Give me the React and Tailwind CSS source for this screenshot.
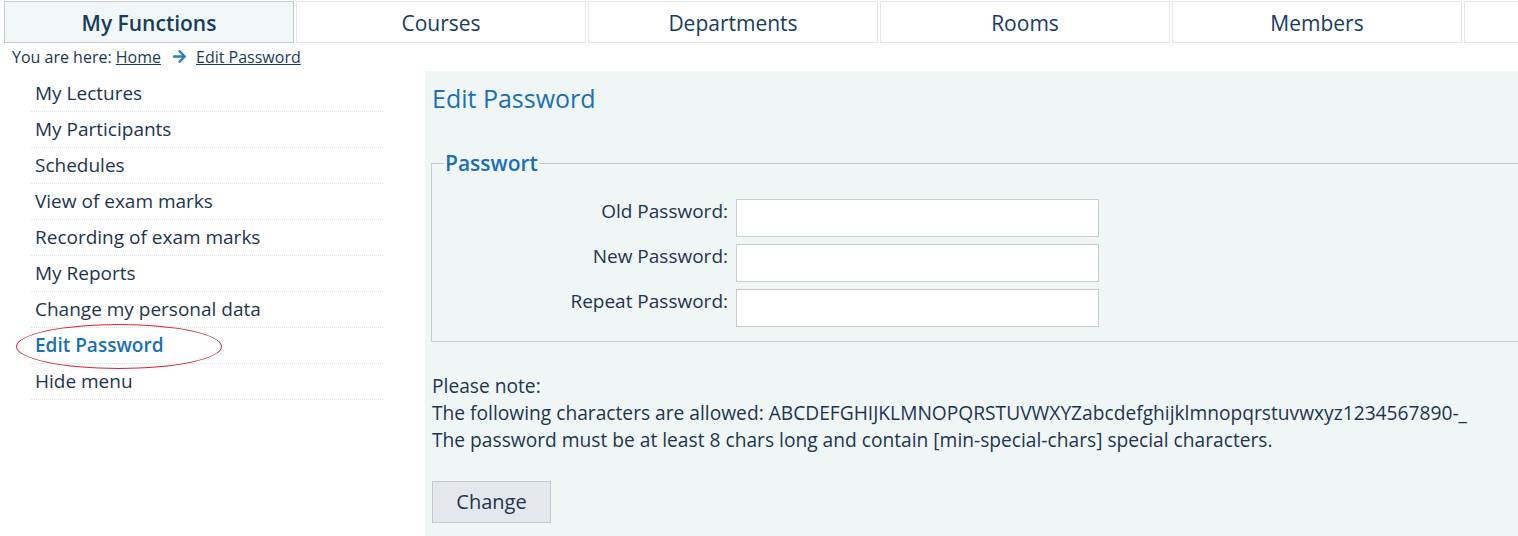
import React from 'react';
import { FaArrowRight } from 'react-icons/fa';

const tabs = ['My Functions', 'Courses', 'Departments', 'Rooms', 'Members', 'Help'];

const menu = [
    'My Lectures',
    'My Participants',
    'Schedules',
    'View of exam marks',
    'Recording of exam marks',
    'My Reports',
    'Change my personal data',
    'Edit Password',
    'Hide menu',
];

const fields = ['Old Password:', 'New Password:', 'Repeat Password:'];

const App = () => {
    return (
        <div className="w-[1518px] h-[536px] overflow-hidden bg-white text-[#1c3550]" style={{ fontFamily: '"Open Sans", "Noto Sans", sans-serif' }}>
            {/* top navigation */}
            <div className="flex gap-[2px] pl-[4px] pt-[1px]">
                {tabs.map((t, i) => (
                    <div
                        key={t}
                        className={
                            i === 0
                                ? 'w-[290px] h-[42px] shrink-0 flex items-center justify-center pt-[3px] border border-[#c9cccc] bg-[#f1f7f7] text-[21px] font-semibold text-[#173c5e]'
                                : 'w-[290px] h-[42px] shrink-0 flex items-center justify-center pt-[3px] border border-[#e4e7e9] bg-white text-[21px] text-[#173c5e]'
                        }
                    >
                        {i === 5 ? '' : t}
                    </div>
                ))}
            </div>

            {/* breadcrumb */}
            <div className="h-[28px] pl-[12px] pb-[1px] flex items-center text-[16px] text-[#1c3550]">
                <span>You are here:&nbsp;</span>
                <a className="underline text-[#173c5e]">Home</a>
                <FaArrowRight className="ml-[11px] mr-[9px] text-[15px] text-[#2a7fc0]" />
                <a className="underline text-[#173c5e]">Edit Password</a>
            </div>

            <div className="flex">
                {/* sidebar */}
                <div className="w-[425px] shrink-0 pt-[5px]">
                    <ul className="ml-[31px] w-[352px]">
                        {menu.map((m) => (
                            <li
                                key={m}
                                className="relative h-[36px] flex items-center pl-[4px] border-b border-dotted border-[#dde1e3] text-[19px]"
                            >
                                {m === 'Edit Password' ? (
                                    <>
                                        <span className="font-semibold text-[#1a6fb5]">{m}</span>
                                        <div className="absolute left-[-15px] top-[-4px] w-[206px] h-[45px] rounded-[50%] border border-[#d22a35]" />
                                    </>
                                ) : (
                                    <span className="text-[#1c3550]">{m}</span>
                                )}
                            </li>
                        ))}
                    </ul>
                </div>

                {/* content panel */}
                <div className="flex-1 h-[465px] overflow-hidden bg-[#f0f6f6] pl-[6px] pt-[11px]">
                    <h1 className="pl-[1px] text-[25px] leading-[32px] text-[#1a6fb5]">Edit Password</h1>

                    <fieldset className="mt-[35px] mr-[-20px] border border-[#c9cccc] pb-[14px]">
                        <legend className="ml-[12px] px-[1px] text-[21px] leading-[28px] font-semibold text-[#1a6fb5]">Passwort</legend>
                        <div className="flex flex-col gap-[7px] pt-[22px]">
                            {fields.map((f) => (
                                <div key={f} className="flex items-start">
                                    <label className="w-[296px] text-right text-[19px] leading-[24px] text-[#1c3550]">{f}</label>
                                    <input
                                        type="password"
                                        className="ml-[8px] w-[363px] h-[38px] border border-[#c9cccc] bg-white"
                                    />
                                </div>
                            ))}
                        </div>
                    </fieldset>

                    <div className="mt-[30px] pl-[1px] text-[19.2px] leading-[27px] text-[#1c3550]">
                        <p>Please note:</p>
                        <p>The following characters are allowed: ABCDEFGHIJKLMNOPQRSTUVWXYZabcdefghijklmnopqrstuvwxyz1234567890-_</p>
                        <p>The password must be at least 8 chars long and contain [min-special-chars] special characters.</p>
                    </div>

                    <button
                        type="button"
                        className="mt-[28px] ml-[1px] w-[119px] h-[42px] border border-[#c5c9cc] bg-[#e4e8ec] text-[20px] text-[#1c3550]"
                    >
                        Change
                    </button>
                </div>
            </div>
        </div>
    );
};

export default App;
